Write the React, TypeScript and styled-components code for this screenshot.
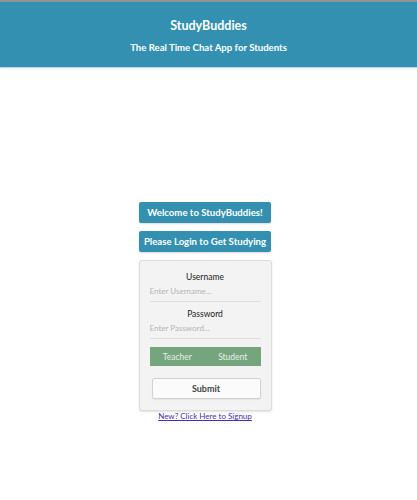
import React from "react";
import styled, { createGlobalStyle } from "styled-components";

const Global = createGlobalStyle`
  html, body { margin: 0; padding: 0; background: #ffffff; }
  body { font-family: "Lato", "Open Sans", sans-serif; }
`;

const Header = styled.header`
  background: #3390b0;
  border-top: 2px solid #8f9496;
  border-bottom: 1px solid #b7dbe8;
  height: 65px;
  box-sizing: content-box;
  display: flex;
  flex-direction: column;
  align-items: center;
  color: #ffffff;
  box-shadow: 0 1px 2px rgba(0,0,0,0.08);
`;

const Title = styled.h1`
  margin: 15px 0 0;
  font-size: 12.5px;
  font-weight: 700;
  line-height: 17px;
`;

const Subtitle = styled.h2`
  margin: 7px 0 0;
  font-size: 9.6px;
  font-weight: 700;
  line-height: 14px;
`;

const Main = styled.main`
  display: flex;
  flex-direction: column;
  align-items: center;
  padding: 134px 7px 0 0;
`;

const Banner = styled.div`
  width: 132px;
  height: 21px;
  box-sizing: border-box;
  background: #3390b0;
  color: #ffffff;
  font-size: 9.6px;
  font-weight: 700;
  display: flex;
  align-items: center;
  justify-content: center;
  border-radius: 2px;
  box-shadow: 0 1px 2px rgba(0,0,0,0.15);
  margin-bottom: 8px;
  white-space: nowrap;
`;

const Card = styled.form`
  width: 133px;
  box-sizing: border-box;
  background: #f3f3f3;
  border: 1px solid #dcdcdc;
  border-radius: 3px;
  box-shadow: 0 1px 2px rgba(0,0,0,0.12);
  padding: 8px 10px 11px;
  display: flex;
  flex-direction: column;
  align-items: stretch;
`;

const Label = styled.label<{ $first?: boolean }>`
  text-align: center;
  font-size: 8.5px;
  color: #222;
  line-height: 12px;
  margin-top: ${(p) => (p.$first ? "2px" : "6px")};
`;

const Input = styled.input`
  border: none;
  border-bottom: 1px solid #dedede;
  background: transparent;
  font-family: inherit;
  font-size: 8px;
  padding: 3px 0 5px;
  outline: none;
  color: #333;
  &::placeholder { color: #b4b4b4; }
`;

const Toggle = styled.div`
  margin-top: 8px;
  height: 19px;
  background: #74a57d;
  display: grid;
  grid-template-columns: 1fr 1fr;
  align-items: center;
  justify-items: center;
`;

const ToggleOption = styled.span`
  font-size: 8.5px;
  color: #e8efe9;
`;

const Submit = styled.button`
  margin: 12px 0 0 2px;
  height: 21px;
  border: 1px solid #d2d2d2;
  border-radius: 2px;
  background: #fbfbfb;
  font-family: inherit;
  font-size: 9px;
  font-weight: 700;
  color: #444;
  box-shadow: 0 1px 1px rgba(0,0,0,0.06);
`;

const SignupLink = styled.a`
  margin-top: 0;
  font-size: 8px;
  line-height: 11px;
  color: #4b2cb0;
  text-decoration: underline;
`;

export default function App() {
  return (
    <>
      <Global />
      <Header>
        <Title>StudyBuddies</Title>
        <Subtitle>The Real Time Chat App for Students</Subtitle>
      </Header>
      <Main>
        <Banner>Welcome to StudyBuddies!</Banner>
        <Banner>Please Login to Get Studying</Banner>
        <Card onSubmit={(e) => e.preventDefault()}>
          <Label $first>Username</Label>
          <Input placeholder="Enter Username..." />
          <Label>Password</Label>
          <Input type="password" placeholder="Enter Password..." />
          <Toggle>
            <ToggleOption>Teacher</ToggleOption>
            <ToggleOption>Student</ToggleOption>
          </Toggle>
          <Submit type="submit">Submit</Submit>
        </Card>
        <SignupLink href="#">New? Click Here to Signup</SignupLink>
      </Main>
    </>
  );
}
